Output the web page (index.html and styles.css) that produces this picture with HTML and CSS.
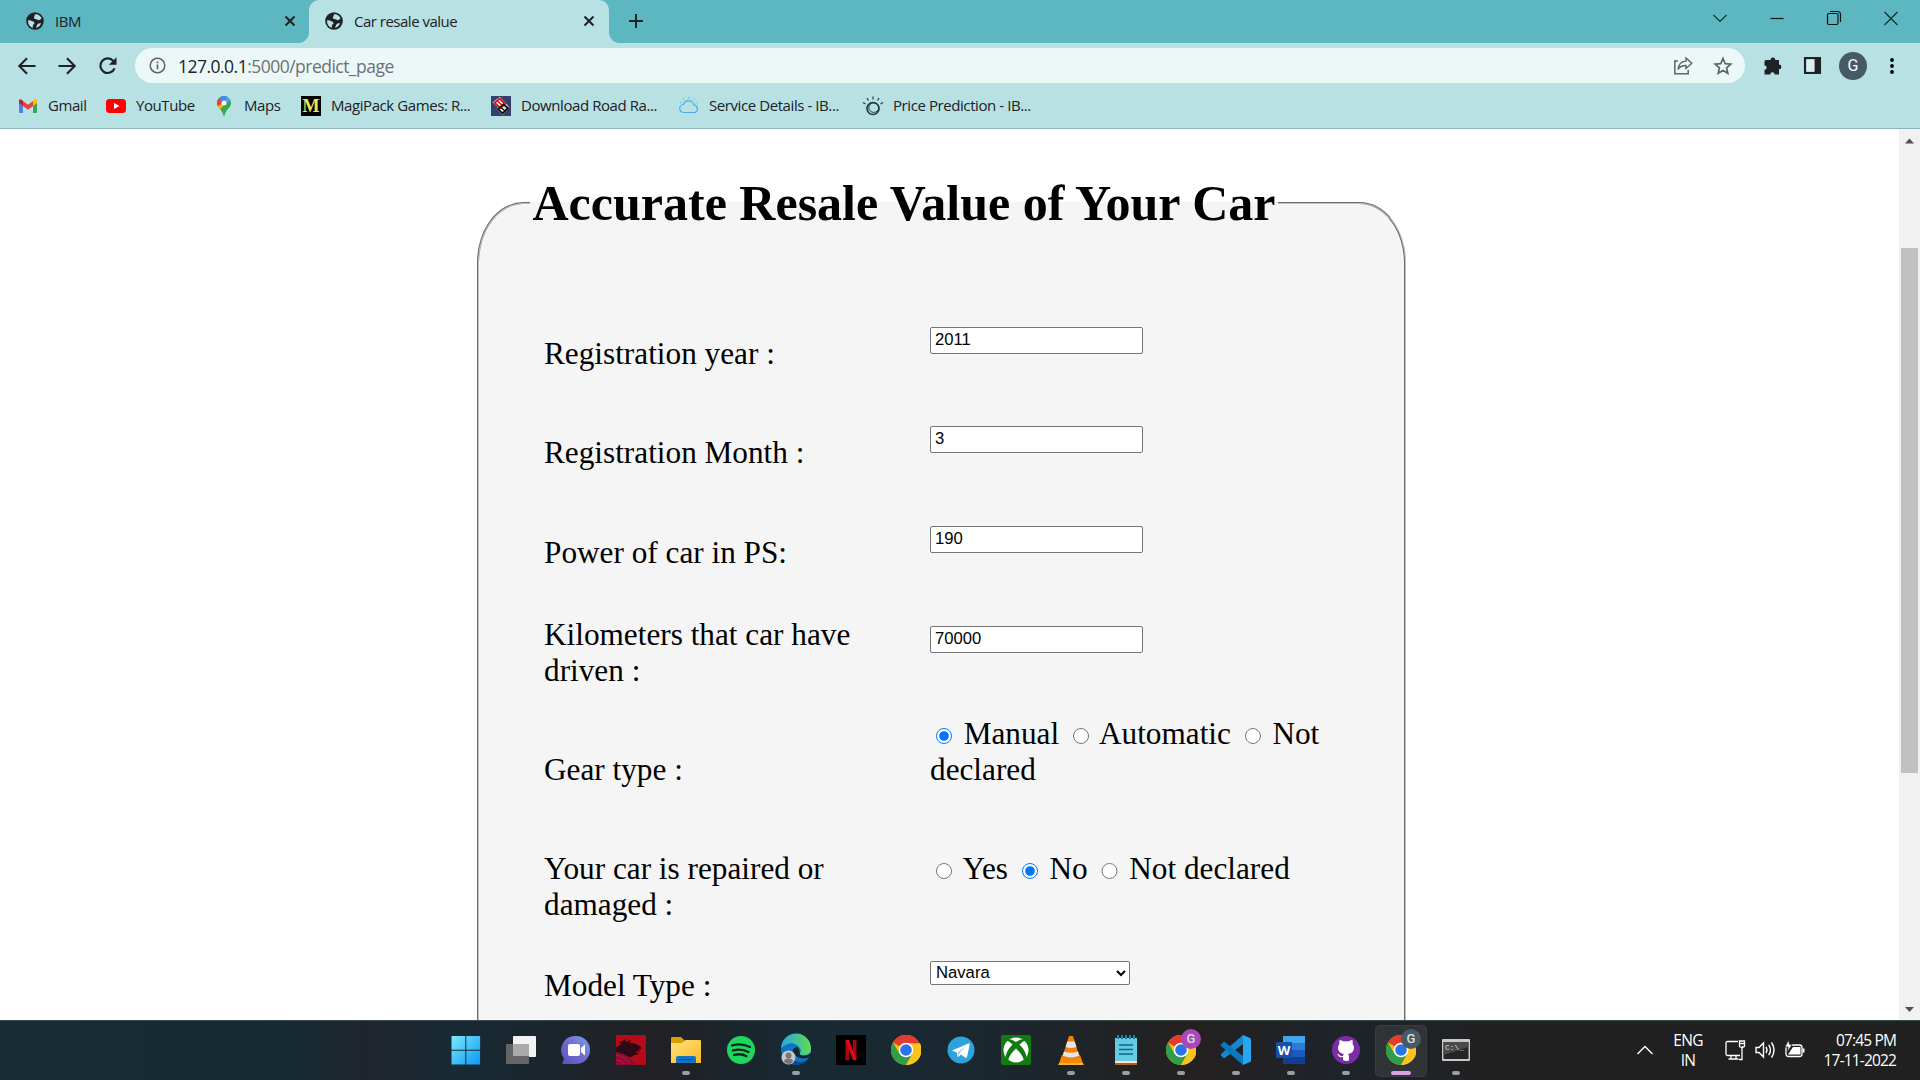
FILE: index.html
```html
<!DOCTYPE html>
<html lang="en">
<head>
<meta charset="utf-8">
<title>Car resale value</title>
<link rel="stylesheet" href="styles.css">
</head>
<body>
<svg width="0" height="0" class="defs" aria-hidden="true">
  <defs>
    <symbol id="globe" viewBox="0 0 18 18"><circle cx="9" cy="9" r="8.8" fill="#202124"/><path d="M2 8.6C3.500 7.500 5.500 8.600 7.200 9.600 9 10.600 8.800 12 7.400 12.600 6.600 13 7 15.500 6.500 15.900 3.800 15 1.900 12.500 2 8.600zM9 2.200C12 1.800 14.500 3.600 15.600 6.300 14.600 7.400 13 8.800 12 8 11 7 9.500 8 8.200 6.600 7.300 5.300 8.800 4.400 9 2.200zM10 15.700C11 14 10.500 13 12 11.800 13 11 14.500 11.500 15.200 11 14.400 13.500 12.500 15.400 10 15.700z" fill="#b8e1e4"/></symbol>
    <symbol id="x" viewBox="0 0 12 12"><path d="M1.500 1.500l9 9M10.500 1.500l-9 9" stroke="#202124" stroke-width="2" fill="none"/></symbol>
    <symbol id="chrome" viewBox="0 0 30 30"><circle cx="15" cy="15" r="15" fill="#fbbc05"/><path d="M15 15L2 7.500A15 15 0 0 1 28 7.500z" fill="#e33b2e"/><path d="M28 7.500H15V15h10z" fill="#e33b2e"/><path d="M2 7.500A15 15 0 0 0 15 30L21.500 18.700 15 15 8.500 18.700z" fill="#2f9e4a"/><path d="M29 8.200H15l6.500 10.500L15 30A15 15 0 0 0 29 8.200z" fill="#fcc31e"/><circle cx="15" cy="15" r="7.300" fill="#fff"/><circle cx="15" cy="15" r="5.800" fill="#2d73e8"/></symbol>
  </defs>
</svg>

<header class="browser">
  <div class="tabs">
    <div class="tab"><svg class="fav"><use href="#globe"/></svg><span class="t-ibm">IBM</span><svg class="close"><use href="#x"/></svg></div>
    <div class="tab active"><svg class="fav"><use href="#globe"/></svg><span class="t-car">Car resale value</span><svg class="close"><use href="#x"/></svg></div>
    <svg class="plus" viewBox="0 0 16 16"><path d="M8 1v14M1 8h14" stroke="#202124" stroke-width="2"/></svg>
    <div class="window">
      <svg viewBox="0 0 16 16"><path d="M1.500 5L8 11.500 14.500 5" stroke="#173238" stroke-width="1.200" fill="none"/></svg>
      <svg viewBox="0 0 16 16"><path d="M1.500 8.500h13" stroke="#111" stroke-width="1.200"/></svg>
      <svg viewBox="0 0 16 16"><rect x="1.500" y="3.500" width="10.500" height="11" rx="1.500" fill="none" stroke="#111" stroke-width="1.200"/><path d="M4 1.500h7.500a3 3 0 0 1 3 3V12" fill="none" stroke="#111" stroke-width="1.200"/></svg>
      <svg viewBox="0 0 16 16"><path d="M1.500 2l13 13M14.500 2l-13 13" stroke="#122c31" stroke-width="1.200"/></svg>
    </div>
  </div>
  <div class="toolbar">
    <div class="nav">
      <svg viewBox="0 0 20 20"><path d="M18.500 10H2.500M10 2.200L2.300 10l7.700 7.800" stroke="#202124" stroke-width="2.100" fill="none"/></svg>
      <svg viewBox="0 0 20 20"><path d="M1.500 10h16M10 2.200l7.700 7.800-7.700 7.800" stroke="#202124" stroke-width="2.100" fill="none"/></svg>
      <svg viewBox="0 0 20 20"><path d="M16.500 12.300A7.300 7.300 0 1 1 15.300 5" stroke="#202124" stroke-width="2.200" fill="none"/><path d="M18.500 1.200v7.600h-7.600z" fill="#202124"/></svg>
    </div>
    <div class="omnibox">
      <svg class="info" viewBox="0 0 18 18"><circle cx="9" cy="9" r="7.700" stroke="#5f6368" stroke-width="1.600" fill="none"/><path d="M9 8v5M9 4.700v1.800" stroke="#5f6368" stroke-width="1.800"/></svg>
      <span class="url"><b>127.0.0.1</b>:5000/predict_page</span>
      <svg class="share" viewBox="0 0 20 20"><path d="M5 5H1.800v12.800h13.400V14" fill="none" stroke="#5f6368" stroke-width="1.500"/><path d="M13 2l5.800 5.200L13 12.500V9.500C9 9.500 6.700 10.500 5 13.500 5.300 9 8 5.600 13 5.100z" fill="none" stroke="#5f6368" stroke-width="1.400"/></svg>
      <svg class="star" viewBox="0 0 20 20"><path d="M10 2.500l2.200 5.100 5.600.5-4.200 3.700 1.200 5.500L10 14.400l-4.800 2.900 1.200-5.500L2.200 8.100l5.600-.5z" fill="none" stroke="#5f6368" stroke-width="1.700"/></svg>
    </div>
    <div class="actions">
      <svg viewBox="0 0 20 20"><path d="M3 4h4.500a2.400 2.400 0 1 1 4.800 0H16v4.500a2.400 2.400 0 1 1 0 4.800V18.500h-4.300a2.200 2.200 0 0 0-4.400 0H1.500v-4.700a2.200 2.200 0 0 0 0-4.400V5.500Q1.500 4 3 4z" fill="#202124"/></svg>
      <svg viewBox="0 0 20 20"><path d="M1 1h18v18H1zM3.500 3.500v13H12v-13z" fill="#202124" fill-rule="evenodd"/><path d="M3.500 3.500H12v13H3.500z" fill="#d8eef0"/></svg>
      <span class="avatar">G</span>
      <svg viewBox="0 0 20 20"><circle cx="10" cy="4" r="1.900"/><circle cx="10" cy="10" r="1.900"/><circle cx="10" cy="16" r="1.900"/></svg>
    </div>
  </div>
  <nav class="bookmarks">
    <a class="b1"><svg viewBox="0 0 20 20"><path d="M1 4.500V16q0 1 1 1h3V9z" fill="#4285f4"/><path d="M19 4.500V16q0 1-1 1h-3V9z" fill="#34a853"/><path d="M15 5l2-1.500q2-.8 2 1.500v2L15 10z" fill="#fbbc04"/><path d="M5 5v5L1 7V5q0-2.300 2-1.500z" fill="#c5221f"/><path d="M5 5l5 3.800L15 5v5l-5 3.800L5 10z" fill="#ea4335"/></svg><span>Gmail</span></a>
    <a class="b2"><svg viewBox="0 0 20 20"><rect y="3" width="20" height="14" rx="3.500" fill="#f00"/><path d="M8 7v6l5.500-3z" fill="#fff"/></svg><span>YouTube</span></a>
    <a class="b3"><svg viewBox="0 0 20 20"><path d="M10 0A7 7 0 0 0 3 7c0 5 5.500 6 6.500 13h1C11.500 13 17 12 17 7A7 7 0 0 0 10 0z" fill="#34a853"/><path d="M10 0A7 7 0 0 0 4.600 2.500L10 7l4-6z" fill="#4285f4"/><path d="M4.600 2.500A7 7 0 0 0 3.700 10L10 7z" fill="#ea4335"/><path d="M3.700 10q1 1.700 2.600 3.200L15 3.500 10 7z" fill="#fbbc04"/><path d="M12.500.5A7 7 0 0 1 16.200 4L11 8z" fill="#5b9cf5"/><circle cx="10" cy="7" r="2.500" fill="#fff"/></svg><span>Maps</span></a>
    <a class="b4"><i class="magi">M</i><span>MagiPack Games: R...</span></a>
    <a class="b5"><svg viewBox="0 0 20 20"><rect width="20" height="20" fill="#34406b"/><path d="M9 0.800L18.500 11.500 11.500 19.300 5.500 13 7 11 1.500 6.500z" fill="#eee"/><path d="M9 2.500L14 8 9.500 12 3.500 6.800z" fill="none" stroke="#d81920" stroke-width="1.900"/><path d="M6.500 5l5 4.800" stroke="#d81920" stroke-width="1.400"/><path d="M12.500 8.500L17 12l-5.500 5.500L7 13z" fill="none" stroke="#111" stroke-width="1.900"/><path d="M9.500 11l4.500 4" stroke="#111" stroke-width="1.400"/></svg><span>Download Road Ra...</span></a>
    <a class="b6"><svg viewBox="0 0 20 20" fill="none" stroke-width="1.200"><path d="M5 16.500a4 4 0 0 1-.5-8A5.500 5.500 0 0 1 15 9.200a3.700 3.700 0 0 1 .5 7.300z" stroke="#4fa8ed"/><path d="M10 3V.500M5.500 4L4 2M14.500 4L16 2M2.500 7L.8 6M17.500 7l1.700-1M12 6.500a4 4 0 0 1 4.500 4" stroke="#64d6de"/></svg><span>Service Details - IB...</span></a>
    <a class="b7"><svg viewBox="0 0 20 20" fill="none" stroke="#26383c"><circle cx="10" cy="12.500" r="6" stroke-width="1.700"/><ellipse cx="10.800" cy="11.600" rx="5" ry="4.800" stroke-width="1"/><path d="M10 3.500V.500M5.500 4.500L4 2M14.500 4.500L16 2M2.500 8L0 6.500M17.500 8L20 6.500" stroke-width="1.200"/></svg><span>Price Prediction - IB...</span></a>
  </nav>
</header>

<main class="viewport">
  <div class="page">
    <fieldset>
      <legend>Accurate Resale Value of Your Car</legend>
      <div class="form">
        <label class="low">Registration year :</label><div><input type="text" value="2011"></div>
        <label class="low">Registration Month :</label><div><input type="text" value="3"></div>
        <label class="low third">Power of car in PS:</label><div><input type="text" value="190"></div>
        <label>Kilometers that car have driven :</label><div class="inset"><input type="text" value="70000"></div>
        <label class="line2">Gear type :</label>
        <div><input type="radio" name="gear" checked> <span>Manual</span> <input type="radio" name="gear"> <span>Automatic</span> <input type="radio" name="gear"> <span>Not</span> <span>declared</span></div>
        <label>Your car is repaired or damaged :</label>
        <div><input type="radio" name="dmg"> <span>Yes</span> <input type="radio" name="dmg" checked> <span>No</span> <input type="radio" name="dmg"> <span>Not declared</span></div>
        <label class="model">Model Type :</label><div><select><option>Navara</option></select></div>
      </div>
    </fieldset>
  </div>
  <div class="scrollbar">
    <svg viewBox="0 0 21 22"><path d="M6 14.500L10.500 9.500 15 14.500z" fill="#505050"/></svg>
    <div class="track"><div class="thumb"></div></div>
    <svg viewBox="0 0 21 22"><path d="M6 9L10.500 14 15 9z" fill="#505050"/></svg>
  </div>
</main>

<footer class="taskbar">
  <div class="apps">
    <div class="app"><svg viewBox="0 0 30 30"><defs><linearGradient id="win" x2="1" y2="1"><stop stop-color="#7beafc"/><stop offset="1" stop-color="#0a97f5"/></linearGradient></defs><path d="M.5 1h13.800v13.800H.5zM15.300 1h13.800v13.800H15.300zM.5 15.800h13.800v13.800H.5zM15.300 15.800h13.800v13.800H15.300z" fill="url(#win)"/></svg></div>
    <div class="app"><svg viewBox="0 0 30 30"><rect x="7" y="1" width="23" height="21" rx="1" fill="#f2f2f2"/><rect y="9" width="23" height="20" rx="1" fill="#656565"/><path d="M7 9h16v12H7z" fill="#aaa"/></svg></div>
    <div class="app"><svg viewBox="0 0 30 30"><defs><linearGradient id="chat" x1="1" x2="0" y2="1"><stop stop-color="#7ba2e8"/><stop offset=".5" stop-color="#6f6bd0"/><stop offset="1" stop-color="#5a50bd"/></linearGradient></defs><path d="M15 1a14 14 0 1 1 0 28H1l2-5.500A14 14 0 0 1 15 1z" fill="url(#chat)"/><rect x="7" y="9" width="12" height="12" rx="2" fill="#fff"/><path d="M20 13l4-3.500v11L20 17z" fill="#fff"/></svg></div>
    <div class="app"><svg viewBox="0 0 30 30"><path d="M0 0h30v30H0z" fill="#b50a1a"/><path d="M0 14v16h22Q12 22 0 14z" fill="#8f0b35"/><path d="M0 12q4-1 5-4l-3-1q5 0 7-3l1 3 5-2-1 3q6 0 11 4v2l-3 .5 2 1.500-5 1 4 2-5 1q-3 4-7 1-4-3-11-4z" fill="#2b0a15"/><path d="M0 20q9 1 14 9M0 25q6 0 8 4" stroke="#c31442" fill="none"/></svg></div>
    <div class="app run"><svg viewBox="0 0 30 30"><defs><linearGradient id="folder" x2="1" y2="1"><stop stop-color="#ffe27c"/><stop offset="1" stop-color="#fbba26"/></linearGradient></defs><path d="M0 3q0-1 1-1h9l3 3v6H0z" fill="#dc9d05"/><path d="M0 8h11l3-3h15q1 0 1 1v22H0z" fill="url(#folder)"/><path d="M5 28v-5q0-2 2-2h16q2 0 2 2v5z" fill="#0e76c4"/><path d="M8 24.500h14" stroke="#074f8a" stroke-width="1.200"/></svg></div>
    <div class="app"><svg viewBox="0 0 30 30"><circle cx="15" cy="15" r="14" fill="#1ed760"/><path d="M6 10.500q9-3 18 1.500M7 15.500q8-2.500 15.500 1.500M8 20q7-2 12.500 1.200" fill="none" stroke="#12241b" stroke-width="2.300" stroke-linecap="round"/></svg></div>
    <div class="app run"><svg viewBox="0 0 30 30"><defs><linearGradient id="edge" x2="1"><stop stop-color="#26a5e0"/><stop offset="1" stop-color="#61dc55"/></linearGradient></defs><circle cx="15" cy="15" r="15" fill="#0d73c9"/><path d="M0 13A15 15 0 0 1 30 14q0 6-7 6-5 0-4-2 2-3-1-6Q11 4 0 13z" fill="url(#edge)"/><path d="M10 21q3 7 11 6 4-1 7-4-4 7-13 7-6-2-5-9z" fill="#0b4789"/><path d="M19 18q-2 2 4 3 3 0 7-3 0 4-4 5-9 2-14-5-1-6 5-6z" fill="#17252e"/><circle cx="7.500" cy="22.500" r="7" fill="#c8c8c8"/><circle cx="7.500" cy="20.500" r="3" fill="#777"/><path d="M3 27q0-3.500 4.500-3.500T12 27q-4 4-9 0z" fill="#777"/></svg></div>
    <div class="app"><svg viewBox="0 0 30 30"><path d="M0 0h30v30H0z"/><path d="M9.500 5h3.500v20H9.500zM17 5h3.500v20H17z" fill="#a9080f"/><path d="M9.500 5H13l7.500 20H17z" fill="#e50914"/></svg></div>
    <div class="app"><svg><use href="#chrome"/></svg></div>
    <div class="app"><svg viewBox="0 0 30 30"><circle cx="15" cy="15" r="13.500" fill="#2ba3dd"/><path d="M6 15.500L22.500 8.500q1.500-.3 1.200 1.200L21 22q-.7 1.500-2 .6l-4-3-2.500 2.200q-.8.500-1-.8l-.8-3.500z" fill="#fff"/><path d="M11.500 17.300l8-5.500-6 6.500-.6 3z" fill="#a9cfe6"/></svg></div>
    <div class="app"><svg viewBox="0 0 30 30"><rect width="30" height="30" rx="2" fill="#107c10"/><circle cx="15" cy="15" r="12.500" fill="#fff"/><path d="M7 4q4 0 8 3 4-3 8-3l1.500 1.500Q22 6 18.500 9.500 26 17 25.500 24L23 26q-1-6-8-12.500Q8 20 7 26l-2.500-2Q4 17 11.500 9.500 8 6 5.500 5.500z" fill="#107c10"/></svg></div>
    <div class="app run"><svg viewBox="0 0 30 30"><path d="M6 20h18l3.500 10h-25z" fill="#f78b08"/><path d="M13 1h4l7 22q-9 5-18 0z" fill="#f57f09"/><path d="M11.400 6.500h7.200l1.800 5.500q-5.400 2-10.800 0zM8 16.500q7 2.500 14 0l1.300 4q-8 4-16.600 0z" fill="#e5e5e5"/><path d="M3 28h24l.6 2H2.400z" fill="#ffb22e"/></svg></div>
    <div class="app run"><svg viewBox="0 0 30 30"><path d="M4 26h22v4H4z" fill="#b75b17"/><path d="M4 3h22v23H4z" fill="#63cce4"/><path d="M4 26h22v2H4z" fill="#f3e6dc"/><path d="M8 10h14M8 14.500h14M8 19h14" stroke="#0d657e" stroke-width="1.500"/><path d="M7 0v4M11 0v4M15 0v4M19 0v4M23 0v4" stroke="#1886a0" stroke-width="2"/></svg></div>
    <div class="app run"><svg><use href="#chrome"/></svg><b class="badge purple">G</b></div>
    <div class="app run"><svg viewBox="0 0 30 30"><path d="M22 0v9L3 23.500l-3-3q-.5-1 .3-1.700z" fill="#1688d2"/><path d="M22 30v-9L3 6.500l-3 3q-.5 1 .3 1.700z" fill="#0879c1"/><path d="M22 0l7 3q1 .5 1 1.500v21q0 1-1 1.500l-7 3z" fill="#27a6f1"/></svg></div>
    <div class="app run"><svg viewBox="0 0 30 30"><path d="M7 1h22v7H7z" fill="#41a5ee"/><path d="M7 8h22v7H7z" fill="#2b7cd3"/><path d="M7 15h22v7H7z" fill="#185abd"/><path d="M7 22h22v7H7z" fill="#103f91"/><rect y="7" width="16" height="16" rx="1" fill="#174fa8"/><text x="8" y="19.500" text-anchor="middle" class="word">W</text></svg></div>
    <div class="app run"><svg viewBox="0 0 30 30"><circle cx="15" cy="15" r="14" fill="#7b2da5"/><path d="M12 25v-3q-4 1-5-2l-1-1q2-.5 3 1.500 1 1 3 .5 0-1.500 1-2-6-1-6-6 0-2.500 1.500-4-.7-2 .2-4 2 0 4 1.600 2.300-.7 4.600 0 2-1.600 4-1.600.9 2 .2 4 1.500 1.500 1.500 4 0 5-6 6 1 .8 1 3v3.500q-3 1-6-.5z" fill="#fff"/></svg></div>
    <div class="app run current"><svg><use href="#chrome"/></svg><b class="badge">G</b></div>
    <div class="app run"><svg viewBox="0 0 30 30"><rect x="1" y="4" width="28" height="22" rx="1" fill="#c9c9c9"/><rect x="2.500" y="7" width="25" height="17" fill="#252525"/><path d="M2.500 7h25v5l-25 8z" fill="#4a4a4a"/><text x="4" y="14.500" class="cmd">C:\_</text></svg></div>
  </div>
  <div class="tray">
    <svg class="up" viewBox="0 0 18 12"><path d="M1.500 10L9 2.500 16.500 10" fill="none" stroke="#fff" stroke-width="1.400"/></svg>
    <div class="lang">ENG<br>IN</div>
    <div class="status">
      <svg viewBox="0 0 20 20" fill="none" stroke="#fff" stroke-width="1.300"><path d="M13 1.500H2.500q-1.500 0-1.500 1.500v11q0 1.500 1.500 1.500H15M6 16v3M11 16v3M3.500 19h10M17 8v11.500h-3M17.500 8V6"/><path d="M14.500 1h5v5.500q-2.500 2-5 0zM14.500 3.500h5"/></svg>
      <svg viewBox="0 0 20 20" fill="none" stroke="#fff" stroke-width="1.400"><path d="M1 7.500h3L8.500 3v14L4 12.500H1zM11 7q2 3 0 6M13.700 4.800q3.500 5.200 0 10.400M16.500 2.500q5 7.500 0 15"/></svg>
      <svg viewBox="0 0 20 20"><rect x="1" y="5" width="16" height="11.500" rx="2.500" fill="none" stroke="#fff" stroke-width="1.300"/><path d="M3 14.500L8 7h7.500v7.500zM17.500 8.500h2v4h-2z" fill="#fff"/><path d="M3.500 0L0 7h3l-.5 5L7 4.500H4.500z" fill="#fff" stroke="#202020" stroke-width=".7"/></svg>
    </div>
    <div class="clock"><span class="time">07:45 PM</span><span>17-11-2022</span></div>
  </div>
</footer>
</body>
</html>
```
FILE: styles.css
```css
* { box-sizing: border-box; }
body { margin: 0; width: 1920px; height: 1080px; overflow: hidden; display: flex; flex-direction: column; background: #fff; font-family: "Open Sans", "Noto Sans", sans-serif; color: #202124; }
svg { display: block; flex: none; overflow: visible; }
.defs { position: absolute; }

/* Browser chrome */
.browser { height: 129px; flex: none; background: #b8e1e4; border-bottom: 1px solid #8fb3b7; }
.tabs { height: 43px; background: #5cb7c1; display: flex; align-items: center; }
.tab { width: 300px; height: 43px; padding: 0 14px 2px 16px; display: flex; align-items: center; font-size: 15px; position: relative; }
.tab:first-child { width: 309px; padding-left: 26px; padding-right: 13px; }
.tab.active { background: #b8e1e4; border-radius: 10px 10px 0 0; }
.tab.active::before, .tab.active::after { content: ""; position: absolute; bottom: 0; width: 10px; height: 10px; }
.tab.active::before { left: -10px; background: radial-gradient(circle at 0 0, #5cb7c1 9.500px, #b8e1e4 10px); }
.tab.active::after { right: -10px; background: radial-gradient(circle at 100% 0, #5cb7c1 9.500px, #b8e1e4 10px); }
.fav { width: 18px; height: 18px; margin-right: 11px; }
.close { width: 12px; height: 12px; margin-left: auto; }
.t-ibm, .t-car { white-space: nowrap; }
.t-ibm { letter-spacing: -.4px; }
.t-car { letter-spacing: -.5px; }
.plus { width: 16px; height: 16px; margin: 0 0 1px 19px; }
.window { margin-left: auto; padding: 0 21px 7px 0; display: flex; gap: 41px; }
.window svg { width: 16px; height: 16px; }
.toolbar { height: 45px; display: flex; align-items: center; }
.nav { width: 135px; padding-left: 17px; display: flex; gap: 20px; }
.nav svg { width: 20px; height: 20px; }
.nav svg:last-child { margin-left: 1px; }
.omnibox { width: 1610px; height: 35px; border-radius: 18px; background: #ecf8f8; padding: 0 12px 0 14px; display: flex; align-items: center; }
.info { width: 17px; height: 17px; }
.url { margin: 0 auto 0 12px; font-size: 17.500px; letter-spacing: -.52px; color: #6b7175; }
.url b { font-weight: 400; color: #202124; }
.share, .star { width: 20px; height: 20px; }
.share { margin-right: 20px; }
.actions { display: flex; align-items: center; padding-left: 18px; }
.actions svg { width: 20px; height: 20px; margin-right: 20px; }
.actions svg:nth-child(2) { width: 19px; height: 19px; margin: 0 17px 0 0; }
.avatar { width: 28px; height: 28px; border-radius: 50%; background: #455a64; color: #fff; font: 16px/28px Roboto, sans-serif; text-align: center; margin-right: 15px; }
.actions svg:last-child { margin: 0; }
.bookmarks { height: 35px; display: flex; font-size: 15px; letter-spacing: -.42px; }
.bookmarks a { display: flex; align-items: center; white-space: nowrap; flex: none; gap: 10px; }
.bookmarks svg { width: 20px; height: 20px; }
.bookmarks span { padding-bottom: 1px; }
.b1 { width: 88px; margin-left: 18px; }
.b2 { width: 108px; }
.b3 { width: 87px; }
.b4 { width: 190px; }
.b5 { width: 188px; }
.b6 { width: 184px; }
.magi { width: 20px; height: 20px; background: #000; color: #f0e35d; font: bold 18px/20px "Liberation Serif", serif; letter-spacing: 0; text-align: center; }

/* Web page */
.viewport { height: 891px; flex: none; display: flex; overflow: hidden; }
.page { width: 1899px; padding: 44px 0 0 477px; font: 31.250px/36px "Liberation Serif", serif; color: #000; }
fieldset { width: 929px; height: 1240px; margin: 0; padding: 0 0 0 51px; min-width: 0; border: 2px groove #c0c0c0; border-radius: 5%; background: #f5f5f5; }
legend { padding: 0 2.500px; font-size: 50px; line-height: 60px; font-weight: 700; white-space: nowrap; }
.form { padding: 94px 0 0 14px; display: grid; grid-template-columns: 386px 400px; grid-template-rows: 99px 100px 91px 99px 135px 111px 100px; align-items: start; }
.form label { max-width: 330px; }
.low { padding-top: 9px; }
.inset { padding-top: 9px; }
.line2 { padding-top: 36px; }
.model { padding-top: 6px; }
.form input[type="text"] { display: block; width: 213px; height: 27px; margin: 0; padding: 0 4px 2px; border: 1px solid #767676; border-radius: 2px; font: 16.670px "Liberation Sans", Arial, sans-serif; background: #fff; }
input[type="radio"] { width: 16.250px; height: 16.250px; margin: 3.750px 3.750px 1px 5.900px; }
select { display: block; width: 200px; height: 24px; margin-top: -1px; padding: 0 0 1px 1px; border: 1px solid #767676; border-radius: 2px; background: #fff; color: #000; font: 16.670px "Liberation Sans", Arial, sans-serif; }
.scrollbar { width: 21px; background: #f1f1f1; display: flex; flex-direction: column; }
.scrollbar svg { width: 21px; height: 22px; }
.track { flex: 1; padding: 97px 2px 0; }
.thumb { height: 525px; background: #c1c1c1; }

/* Taskbar */
.taskbar { height: 60px; flex: none; display: flex; border-top: 1px solid #3b4a4d; background: linear-gradient(90deg, #152d33 0, #162b33 15%, #20252d 19%, #172a34 24%, #212024 34%, #172a34 42%, #1b272e 52%, #242020 62%, #1e242a 70%, #212021 78%, #202020 100%); color: #fff; }
.apps { padding-left: 438px; display: flex; }
.app { width: 55px; height: 59px; padding: 14px 0 0 12.500px; position: relative; }
.app > svg { width: 30px; height: 30px; position: relative; }
.run::after { content: ""; position: absolute; left: 24px; bottom: 5px; width: 8px; height: 4px; border-radius: 2px; background: #9b9ea1; }
.current::before { content: ""; position: absolute; left: 2px; top: 4px; width: 50px; height: 50px; border-radius: 5px; background: #ffffff14; border: 1px solid #ffffff0c; }
.current::after { left: 18px; width: 20px; background: #dca0e4; }
.badge { position: absolute; left: 28px; top: 8px; width: 20px; height: 20px; border-radius: 50%; background: #455a64; color: #ddd; font: 500 13px/20px Roboto, sans-serif; text-align: center; }
.purple { background: #ab47bc; }
.word { font: bold 13px "Open Sans", sans-serif; fill: #fff; }
.cmd { font: 8px "Liberation Mono", monospace; fill: #ddd; }
.tray { margin-left: auto; padding: 0 24px 2px 0; display: flex; align-items: center; font-size: 15.500px; line-height: 20px; }
.up { width: 18px; height: 12px; margin-right: 16px; }
.lang { width: 36px; text-align: center; letter-spacing: -.7px; margin-right: 19px; }
.status { display: flex; gap: 10px; width: 91px; }
.status svg { width: 20px; height: 20px; }
.clock { width: 80px; text-align: right; display: flex; flex-direction: column; letter-spacing: -.85px; }
```
